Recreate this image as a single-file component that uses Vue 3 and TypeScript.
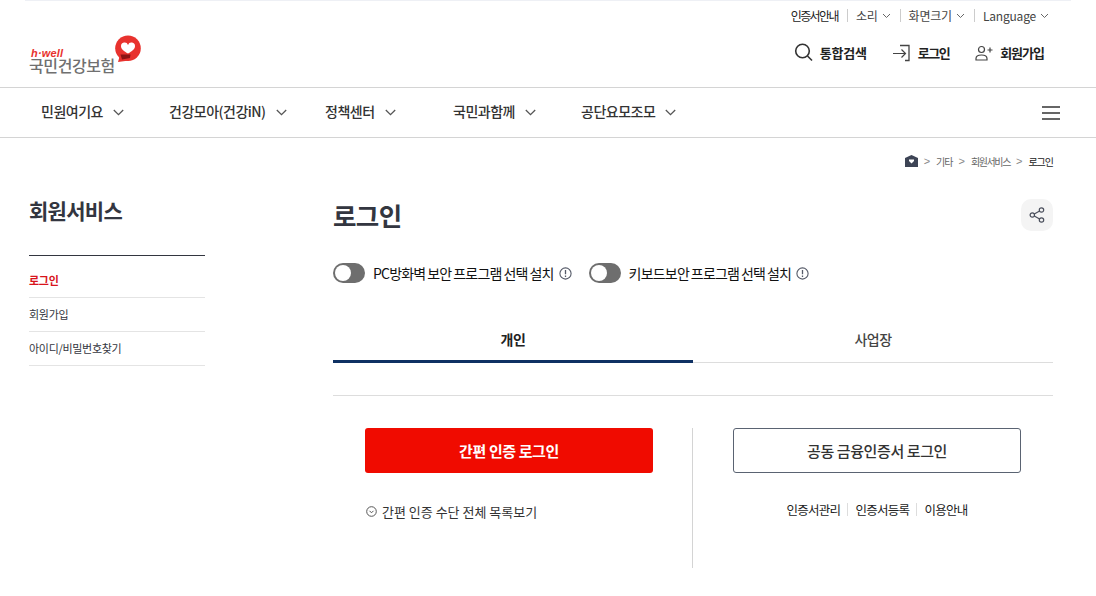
<script setup lang="ts">
const utils = [
  { label: '인증서안내', chev: false },
  { label: '소리', chev: true },
  { label: '화면크기', chev: true },
  { label: 'Language', chev: true },
]
const navs = [
  { label: '민원여기요', w: 128 },
  { label: '건강모아(건강iN)', w: 156 },
  { label: '정책센터', w: 128 },
  { label: '국민과함께', w: 128 },
  { label: '공단요모조모', w: 128 },
]
const sideMenu = ['로그인', '회원가입', '아이디/비밀번호찾기']
</script>

<template>
  <div class="page">
    <header class="header">
      <div class="topline"></div>
      <div class="utils">
        <span v-for="(u, i) in utils" :key="u.label" class="util" :class="{ first: i === 0 }">
          {{ u.label }}
          <svg v-if="u.chev" width="9" height="6" viewBox="0 0 9 6" class="util-chev"><path d="M1 1l3.500 3.500L8 1" fill="none" stroke="#666" stroke-width="1" /></svg>
        </span>
      </div>
      <div class="brandrow">
        <div class="logo">
          <div class="logo-text">
            <em>h·well</em>
            <span>국민건강보험</span>
          </div>
          <svg class="logo-mark" width="28" height="28" viewBox="0 0 28 28">
            <circle cx="14" cy="13.300" r="12.800" fill="#e8322e" />
            <path d="M6 20L4 27l11-1.500z" fill="#e8322e" />
            <path d="M6.500 19.500h10l-.5 3.500-8 1.500z" fill="#8c1414" />
            <path d="M14 18.500c-4-2.500-7-4.200-7-7.300a3.600 3.600 0 0 1 7-1.300 3.600 3.600 0 0 1 7 1.300c0 3.100-3 4.800-7 7.300z" fill="#fff" />
          </svg>
        </div>
        <div class="actions">
          <a class="action search">
            <svg width="19" height="20" viewBox="0 0 19 20"><circle cx="8.500" cy="9" r="6.800" fill="none" stroke="#333" stroke-width="1.600" /><path d="M13.500 14l4.500 4.500" stroke="#333" stroke-width="1.600" /></svg>
            통합검색
          </a>
          <a class="action login">
            <svg class="lift" width="18" height="18" viewBox="0 0 18 18"><path d="M1 9.500h12M9.500 5.500l4 4-4 4" fill="none" stroke="#444" stroke-width="1.200" /><path d="M8 1.500h9v15h-4" fill="none" stroke="#444" stroke-width="1.300" /></svg>
            로그인
          </a>
          <a class="action join">
            <svg class="lift" width="18" height="16" viewBox="0 0 18 16"><circle cx="6.500" cy="4.500" r="3" fill="none" stroke="#444" stroke-width="1.200" /><path d="M1 15v-1.500C1 11 3.500 10 6.500 10s5.500 1 5.500 3.500V15z" fill="none" stroke="#444" stroke-width="1.200" /><path d="M12.500 5h5M15 2.500v5" stroke="#444" stroke-width="1.200" /></svg>
            회원가입
          </a>
        </div>
      </div>
    </header>

    <nav class="nav">
      <a v-for="n in navs" :key="n.label" class="nav-item" :style="{ width: n.w + 'px' }">
        {{ n.label }}
        <svg width="11" height="7" viewBox="0 0 11 7"><path d="M.8 1l4.700 4.700L10.200 1" fill="none" stroke="#555" stroke-width="1.300" /></svg>
      </a>
      <div class="burger"><i></i><i></i><i></i></div>
    </nav>

    <div class="crumbs">
      <svg class="home" width="13" height="12" viewBox="0 0 13 12"><path d="M6.500 0L13 3v9H0V3z" fill="#3d4455" /><path d="M6.500 8.500L4 6V4.500h5V6z" fill="#fff" /></svg>
      <span class="gt">&gt;</span><span>기타</span>
      <span class="gt">&gt;</span><span class="svc">회원서비스</span>
      <span class="gt">&gt;</span><span class="cur">로그인</span>
    </div>

    <div class="body">
      <aside class="side">
        <h2>회원서비스</h2>
        <ul>
          <li v-for="(m, i) in sideMenu" :key="m" :class="{ on: i === 0 }">{{ m }}</li>
        </ul>
      </aside>
      <main class="main">
        <div class="title-row">
          <h1>로그인</h1>
          <button class="share" aria-label="공유">
            <svg width="16" height="16" viewBox="0 0 16 16" fill="none" stroke="#4a4f5c" stroke-width="1.200"><circle cx="12.500" cy="3" r="2.200" /><circle cx="3.300" cy="8" r="2.200" /><circle cx="12.500" cy="13" r="2.200" /><path d="M5.300 7l5.300-3M5.300 9l5.300 3" /></svg>
          </button>
        </div>
        <div class="toggles">
          <div class="toggle" v-for="t in ['PC방화벽 보안 프로그램 선택 설치', '키보드보안 프로그램 선택 설치']" :key="t">
            <span class="switch"><b></b></span>
            <span class="tlabel">{{ t }}</span>
            <svg width="13" height="13" viewBox="0 0 13 13"><circle cx="6.500" cy="6.500" r="5.600" fill="none" stroke="#555a68" stroke-width="1.100" /><path d="M6.500 3v4.200M6.500 8.500v1.500" stroke="#555a68" stroke-width="1.300" /></svg>
          </div>
        </div>
        <div class="tabs">
          <div class="tab active">개인</div>
          <div class="tab">사업장</div>
        </div>
        <div class="panel">
          <div class="col left">
            <button class="btn-red">간편 인증 로그인</button>
            <div class="more">
              <svg width="11" height="11" viewBox="0 0 11 11" fill="none" stroke="#555" stroke-width="1"><circle cx="5.500" cy="5.500" r="4.800" /><path d="M3.500 4.800l2 2 2-2" /></svg>
              간편 인증 수단 전체 목록보기
            </div>
          </div>
          <div class="col right">
            <button class="btn-line">공동 금융인증서 로그인</button>
            <div class="links">
              <span>인증서관리</span><span>인증서등록</span><span>이용안내</span>
            </div>
          </div>
        </div>
      </main>
    </div>
  </div>
</template>

<style>
html, body { margin: 0; background: #fff; overflow: hidden; }
</style>

<style scoped>
.page {
  width: 1096px;
  height: 596px;
  overflow: hidden;
  font-family: "Noto Sans CJK KR", "Noto Sans", sans-serif;
  color: #222;
  background: #fff;
}
.header {
  height: 87px;
  border-bottom: 1px solid #d4d4d4;
  position: relative;
}
.topline {
  height: 1px;
  margin: 0 25px;
  background: #eef0f5;
}
.utils {
  display: flex;
  justify-content: flex-end;
  align-items: center;
  height: 28px;
  padding-right: 47px;
  font-size: 12px;
  letter-spacing: -0.2px;
  color: #444;
}
.util {
  display: flex;
  align-items: center;
  gap: 4px;
  height: 13px;
  margin-left: 9px;
  padding-left: 8px;
  border-left: 1px solid #ccc;
}
.util.first {
  border-left: 0;
  color: #222;
  letter-spacing: -1.600px;
}
.util-chev { margin-top: 1px; }
.brandrow {
  display: flex;
  justify-content: space-between;
  padding: 7px 52px 0 29px;
}
.logo {
  display: flex;
  align-items: flex-start;
  position: relative;
  width: 113px;
  height: 40px;
}
.logo-text {
  display: flex;
  flex-direction: column;
  margin-top: 10px;
}
.logo-text em {
  font-family: "Liberation Sans", sans-serif;
  font-weight: 700;
  font-size: 11px;
  line-height: 12px;
  color: #e8322e;
  margin-left: 2px;
  letter-spacing: 0.2px;
  padding-top: 1px;
}
.logo-text span {
  font-size: 16px;
  line-height: 15px;
  font-weight: 500;
  color: #707070;
  letter-spacing: -0.4px;
  white-space: nowrap;
  margin-top: -1px;
}
.logo-mark {
  position: absolute;
  left: 85px;
  top: -1px;
}
.actions {
  display: flex;
  align-items: center;
  height: 32px;
}
.action {
  display: flex;
  align-items: center;
  gap: 7px;
  font-size: 13px;
  font-weight: 700;
  color: #222;
}
.action .lift { margin-top: 2px; }
.action.search { gap: 7px; margin-right: 25px; letter-spacing: -0.2px; }
.action.login { gap: 8px; margin-right: 26px; letter-spacing: -1.500px; }
.action.join { letter-spacing: -1px; }
.nav {
  height: 49px;
  border-bottom: 1px solid #d4d4d4;
  display: flex;
  align-items: center;
  padding-left: 41px;
  position: relative;
}
.nav-item {
  display: flex;
  align-items: center;
  gap: 10px;
  padding-bottom: 3px;
  font-size: 14px;
  font-weight: 500;
  letter-spacing: -0.5px;
  color: #333;
  white-space: nowrap;
  flex: none;
}
.nav-item svg { margin-top: 3px; }
.burger {
  margin-left: auto;
  margin-right: 36px;
  display: flex;
  flex-direction: column;
  gap: 4px;
  width: 18px;
}
.burger i {
  display: block;
  height: 2px;
  background: #666;
}
.crumbs {
  display: flex;
  align-items: center;
  justify-content: flex-end;
  gap: 5px;
  height: 46px;
  padding-right: 43px;
  font-size: 10px;
  letter-spacing: -1px;
  color: #666;
}
.crumbs .svc { letter-spacing: -1.400px; }
.crumbs .gt {
  font-family: "Liberation Sans", sans-serif;
  color: #888;
  font-size: 11px;
  letter-spacing: 0;
  margin-left: 1px;
  margin-right: 1px;
}
.crumbs .cur { color: #222; }
.body {
  display: flex;
  padding: 0 43px 0 29px;
}
.side {
  width: 176px;
  margin-right: 128px;
}
.side h2 {
  margin: 0;
  padding-top: 11px;
  box-sizing: border-box;
  font-size: 21px;
  line-height: 30px;
  font-weight: 700;
  letter-spacing: -0.7px;
  color: #333640;
  border-bottom: 1px solid #333640;
  height: 72px;
}
.side ul {
  list-style: none;
  margin: 0;
  padding: 8px 0 0;
}
.side li {
  height: 34px;
  line-height: 33px;
  box-sizing: border-box;
  font-size: 11px;
  letter-spacing: -0.3px;
  color: #333640;
  border-bottom: 1px solid #e4e4e4;
}
.side li.on {
  color: #d8141c;
  font-weight: 700;
}
.main { flex: 1; }
.title-row {
  display: flex;
  justify-content: space-between;
  align-items: center;
  height: 32px;
  margin-top: 15px;
}
.title-row h1 {
  margin: -2px 0 0;
  font-size: 25.500px;
  font-weight: 700;
  letter-spacing: -0.6px;
  color: #333640;
}
.share {
  width: 32px;
  height: 32px;
  border: 0;
  border-radius: 10px;
  background: #f4f4f4;
  display: flex;
  align-items: center;
  justify-content: center;
  padding: 0;
}
.toggles {
  display: flex;
  gap: 17px;
  margin-top: 27px;
  height: 30px;
  align-items: center;
}
.toggle {
  display: flex;
  align-items: center;
}
.switch {
  width: 32px;
  height: 20px;
  border-radius: 10px;
  background: #6e6e6e;
  position: relative;
  display: block;
  margin-right: 8px;
}
.switch b {
  position: absolute;
  left: 2px;
  top: 2px;
  width: 16px;
  height: 16px;
  border-radius: 50%;
  background: #fff;
}
.tlabel {
  font-size: 14px;
  font-weight: 400;
  letter-spacing: -0.8px;
  word-spacing: -0.5px;
  color: #111;
  margin-right: 5px;
}
.tabs {
  display: flex;
  margin-top: 31px;
  height: 44px;
  border-bottom: 1px solid #ddd;
  box-sizing: border-box;
}
.tab {
  flex: 1;
  text-align: center;
  font-size: 14px;
  font-weight: 500;
  line-height: 41px;
  letter-spacing: -0.5px;
  color: #444;
}
.tab.active {
  font-weight: 700;
  color: #222;
  border-bottom: 3px solid #0f3163;
  height: 44px;
  box-sizing: border-box;
}
.panel {
  display: flex;
  margin-top: 32px;
  border-top: 1px solid #ddd;
  padding-top: 32px;
}
.col {
  width: 360px;
  height: 140px;
  box-sizing: border-box;
  padding: 0 32px 0 32px;
}
.col.left { border-right: 1px solid #d4d4d4; }
.col.right { padding: 0 32px 0 40px; }
.btn-red, .btn-line {
  display: block;
  width: 288px;
  height: 45px;
  border-radius: 3px;
  font-family: inherit;
  font-size: 15px;
  letter-spacing: -0.4px;
  padding: 0;
  box-sizing: border-box;
}
.btn-red {
  background: #f00b00;
  color: #fff;
  border: 0;
  font-weight: 700;
}
.btn-line {
  background: #fff;
  color: #333;
  border: 1px solid #5a6372;
  font-weight: 500;
}
.more {
  display: flex;
  align-items: center;
  gap: 5px;
  margin-top: 28px;
  padding-left: 1px;
  font-size: 13px;
  letter-spacing: 0;
  color: #333;
  height: 20px;
}
.links {
  display: flex;
  justify-content: center;
  margin-top: 26px;
  font-size: 12.500px;
  letter-spacing: -0.7px;
  color: #222;
  height: 20px;
  align-items: center;
}
.links span {
  padding: 0 7px;
  line-height: 13px;
  border-left: 1px solid #ddd;
}
.links span:first-child { border-left: 0; }
</style>
